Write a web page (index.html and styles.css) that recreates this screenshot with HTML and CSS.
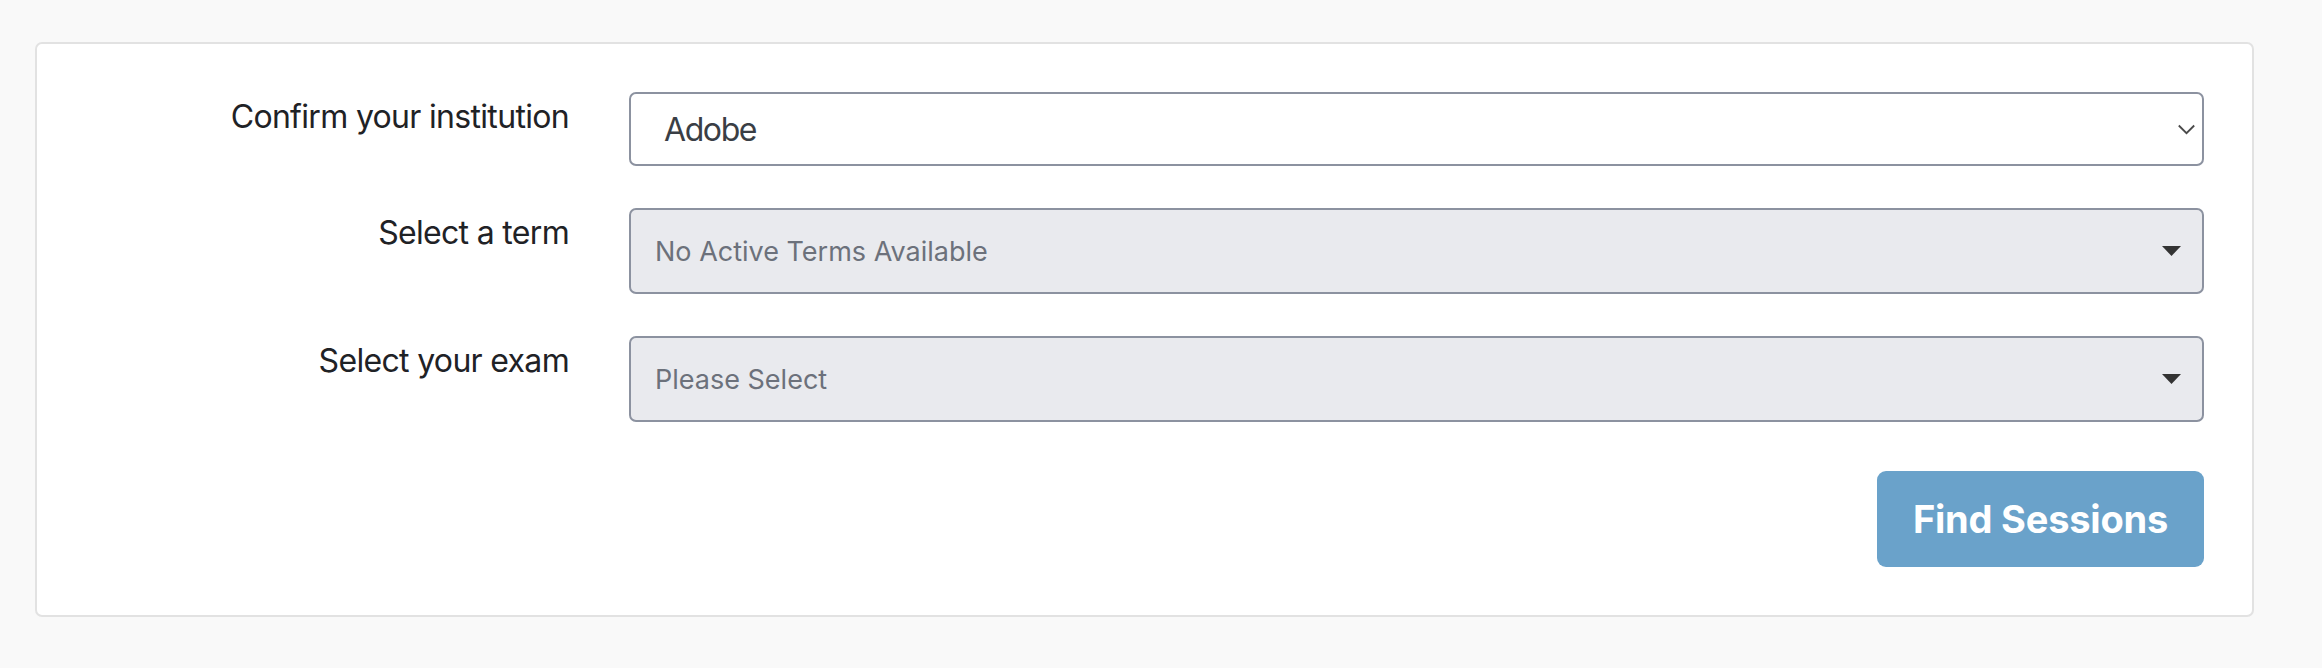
FILE: index.html
```html
<!DOCTYPE html>
<html lang="en">
<head>
<meta charset="utf-8">
<title>Find Sessions</title>
<link rel="stylesheet" href="styles.css">
</head>
<body>
<div class="card">
  <form class="form-grid">
    <label class="label">Confirm your institution</label>
    <div class="select select-light">
      <span class="select-value">Adobe</span>
      <svg class="chevron" width="17" height="11" viewBox="0 0 17 11"><path d="M0.8 1.5 L8.5 9.2 L16.2 1.5" fill="none" stroke="#4a4a4a" stroke-width="1.8"/></svg>
    </div>

    <label class="label">Select a term</label>
    <div class="select select-disabled">
      <span class="select-placeholder">No Active Terms Available</span>
      <svg class="caret" width="19" height="10" viewBox="0 0 19 10"><path d="M0 0 H19 L9.5 10 Z" fill="#333"/></svg>
    </div>

    <label class="label">Select your exam</label>
    <div class="select select-disabled">
      <span class="select-placeholder">Please Select</span>
      <svg class="caret" width="19" height="10" viewBox="0 0 19 10"><path d="M0 0 H19 L9.5 10 Z" fill="#333"/></svg>
    </div>

    <div class="actions">
      <button type="button" class="btn-find">Find Sessions</button>
    </div>
  </form>
</div>
</body>
</html>
```

FILE: styles.css
```css
html, body {
  margin: 0;
  padding: 0;
}
body {
  background: #f9f9f9;
  font-family: Inter, "Noto Sans", "Liberation Sans", sans-serif;
  color: #212529;
}
.card {
  margin: 42px 68px 0 35px;
  background: #fff;
  border: 2px solid #e2e2e2;
  border-radius: 7px;
  padding: 48px 48px 48px 48px;
}
.form-grid {
  display: grid;
  grid-template-columns: 484px 1fr;
  column-gap: 60px;
  row-gap: 42px;
  margin: 0;
}
.label {
  text-align: right;
  font-size: 32px;
  line-height: 48px;
  margin-top: 1px;
  letter-spacing: -0.68px;
  color: #1f2226;
}
.select {
  display: flex;
  align-items: center;
  justify-content: space-between;
  box-sizing: border-box;
  border: 2px solid #8c92a0;
  border-radius: 7px;
}
.select-light {
  height: 74px;
  background: #fff;
  padding: 0 7px 0 33px;
}
.select-value {
  font-size: 32px;
  letter-spacing: -1.4px;
  color: #3a3e45;
}
.select-disabled {
  height: 86px;
  background: #e9eaee;
  padding: 0 21px 0 24px;
}
.select-placeholder {
  font-size: 27px;
  color: #6c717b;
}
.chevron, .caret {
  display: block;
  flex: none;
}
.actions {
  grid-column: 2;
  display: flex;
  justify-content: flex-end;
  margin-top: 7px;
}
.btn-find {
  width: 327px;
  height: 96px;
  border: none;
  border-radius: 9px;
  background: #6aa2ca;
  color: #fff;
  font-family: Inter, "Noto Sans", "Liberation Sans", sans-serif;
  font-weight: 700;
  font-size: 38px;
  padding: 0;
  letter-spacing: -0.2px;
}
```
